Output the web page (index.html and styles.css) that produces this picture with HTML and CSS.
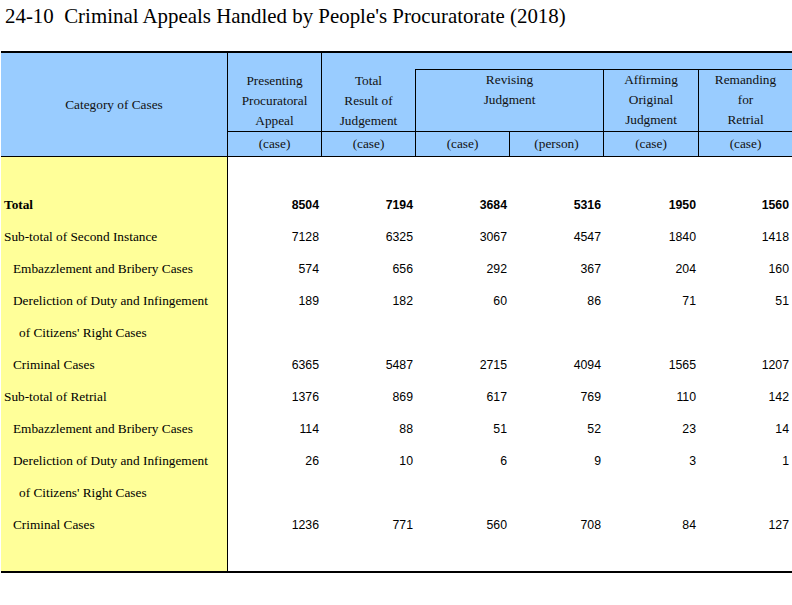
FILE: index.html
```html
<!DOCTYPE html>
<html>
<head>
<meta charset="utf-8">
<link rel="stylesheet" href="styles.css">
</head>
<body>
<div class="page">
  <h1 class="title">24-10&nbsp; Criminal Appeals Handled by People's Procuratorate (2018)</h1>
  <div class="sheet">
    <div class="head">
      <div class="h cat">Category of Cases</div>
      <div class="h pres"><span>Presenting<br>Procuratoral<br>Appeal</span></div>
      <div class="h tot"><span>Total<br>Result of<br>Judgement</span></div>
      <div class="h blank"></div>
      <div class="h rev"><span>Revising<br>Judgment</span></div>
      <div class="h aff"><span>Affirming<br>Original<br>Judgment</span></div>
      <div class="h rem"><span>Remanding<br>for<br>Retrial</span></div>
      <div class="h unit u2">(case)</div>
      <div class="h unit u3">(case)</div>
      <div class="h unit u4">(case)</div>
      <div class="h unit u5">(person)</div>
      <div class="h unit u6">(case)</div>
      <div class="h unit u7">(case)</div>
    </div>
    <div class="body">
      <div class="label"></div><div class="fill"></div>

      <div class="label bold">Total</div>
      <div class="num bold">8504</div><div class="num bold c3">7194</div><div class="num bold">3684</div><div class="num bold">5316</div><div class="num bold">1950</div><div class="num bold">1560</div>

      <div class="label">Sub-total of Second Instance</div>
      <div class="num">7128</div><div class="num c3">6325</div><div class="num">3067</div><div class="num">4547</div><div class="num">1840</div><div class="num">1418</div>

      <div class="label ind1">Embazzlement and Bribery Cases</div>
      <div class="num">574</div><div class="num c3">656</div><div class="num">292</div><div class="num">367</div><div class="num">204</div><div class="num">160</div>

      <div class="label ind1">Dereliction of Duty and Infingement</div>
      <div class="num">189</div><div class="num c3">182</div><div class="num">60</div><div class="num">86</div><div class="num">71</div><div class="num">51</div>

      <div class="label ind2">of Citizens' Right Cases</div><div class="fill"></div>

      <div class="label ind1">Criminal Cases</div>
      <div class="num">6365</div><div class="num c3">5487</div><div class="num">2715</div><div class="num">4094</div><div class="num">1565</div><div class="num">1207</div>

      <div class="label">Sub-total of Retrial</div>
      <div class="num">1376</div><div class="num c3">869</div><div class="num">617</div><div class="num">769</div><div class="num">110</div><div class="num">142</div>

      <div class="label ind1">Embazzlement and Bribery Cases</div>
      <div class="num">114</div><div class="num c3">88</div><div class="num">51</div><div class="num">52</div><div class="num">23</div><div class="num">14</div>

      <div class="label ind1">Dereliction of Duty and Infingement</div>
      <div class="num">26</div><div class="num c3">10</div><div class="num">6</div><div class="num">9</div><div class="num">3</div><div class="num">1</div>

      <div class="label ind2">of Citizens' Right Cases</div><div class="fill"></div>

      <div class="label ind1">Criminal Cases</div>
      <div class="num">1236</div><div class="num c3">771</div><div class="num">560</div><div class="num">708</div><div class="num">84</div><div class="num">127</div>

      <div class="label"></div><div class="fill"></div>
    </div>
  </div>
</div>
</body>
</html>
```

FILE: styles.css
```css
* { box-sizing: border-box; }
html, body { margin: 0; padding: 0; background: #fff; }
body { overflow: hidden; }
.page { width: 792px; padding-left: 1px; }
.title {
  margin: 0;
  font-family: "Liberation Serif", "Times New Roman", serif;
  font-weight: normal;
  font-size: 20.9px;
  line-height: 21px;
  color: #000;
  padding: 6px 0 24px 4px;
  height: 51px;
  white-space: nowrap;
}
.sheet { border-top: 2px solid #000; border-bottom: 2px solid #000; }
.head, .body {
  display: grid;
  grid-template-columns: 227px 94px 93px 95px 94px 95px 1fr;
}
.head {
  grid-template-rows: 17px 61px 26px;
  background: #99ccff;
  font-family: "Liberation Serif", "Times New Roman", serif;
  font-size: 13.3px;
  line-height: 20px;
  color: #111;
  text-align: center;
}
.h { display: flex; flex-direction: column; align-items: center; }
.cat { grid-column: 1; grid-row: 1 / 4; justify-content: center; border-right: 1px solid #000; border-bottom: 1px solid #000; }
.pres { grid-column: 2; grid-row: 1 / 3; justify-content: flex-end; border-right: 1px solid #000; }
.tot { grid-column: 3; grid-row: 1 / 3; justify-content: flex-end; }
.blank { grid-column: 4 / 8; grid-row: 1; border-bottom: 1px solid #000; }
.rev { grid-column: 4 / 6; grid-row: 2; justify-content: flex-start; border-left: 1px solid #000; border-right: 1px solid #000; }
.aff { grid-column: 6; grid-row: 2; justify-content: flex-start; border-right: 1px solid #000; }
.rem { grid-column: 7; grid-row: 2; justify-content: flex-start; }
.unit { grid-row: 3; justify-content: center; border-top: 1px solid #000; border-bottom: 1px solid #000; }
.u2 { grid-column: 2; border-right: 1px solid #000; }
.u3 { grid-column: 3; }
.u4 { grid-column: 4; border-left: 1px solid #000; border-right: 1px solid #000; }
.u5 { grid-column: 5; border-right: 1px solid #000; }
.u6 { grid-column: 6; border-right: 1px solid #000; }
.u7 { grid-column: 7; }

.body {
  grid-template-rows: repeat(12, 32px) 30px;
}
.label {
  grid-column: 1;
  background: #ffff99;
  border-right: 1px solid #000;
  font-family: "Liberation Serif", "Times New Roman", serif;
  font-size: 13.3px;
  line-height: 32px;
  color: #000;
  padding-left: 3px;
  white-space: nowrap;
}
.ind1 { padding-left: 12px; }
.ind2 { padding-left: 18px; }
.fill { grid-column: 2 / 8; }
.num {
  font-family: "Liberation Sans", Arial, sans-serif;
  font-size: 12.3px;
  line-height: 32px;
  text-align: right;
  padding-right: 3px;
  color: #000;
}
.num.c3 { padding-right: 2px; }
.bold { font-weight: bold; }
```
